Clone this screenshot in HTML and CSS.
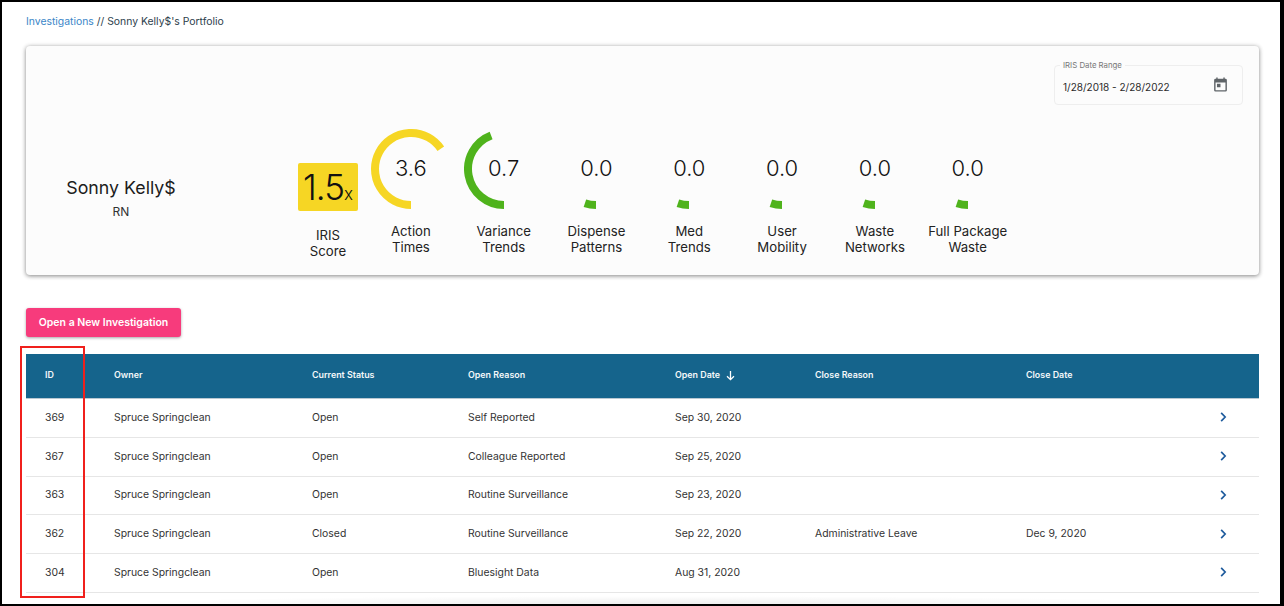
FILE: index.html
```html
<!DOCTYPE html>
<html lang="en">
<head>
<meta charset="utf-8">
<title>Sonny Kelly$'s Portfolio</title>
<link rel="stylesheet" href="styles.css">
</head>
<body>
<div class="page">
  <nav class="crumbs"><a class="crumb-link" href="#">Investigations</a> // Sonny Kelly$'s Portfolio</nav>

  <section class="card">
    <div class="card-top">
      <div class="date-field">
        <span class="date-legend">IRIS Date Range</span>
        <span class="date-value">1/28/2018 - 2/28/2022</span>
        <svg class="cal" viewBox="0 0 24 24" width="17" height="17"><path fill="#5f6468" d="M19 4h-1V2h-2v2H8V2H6v2H5a2 2 0 0 0-2 2v14a2 2 0 0 0 2 2h14a2 2 0 0 0 2-2V6a2 2 0 0 0-2-2zm0 16H5V9h14v11zM7 11h5v5H7z"/></svg>
      </div>
    </div>
    <div class="metrics">
      <div class="person">
        <div class="person-name">Sonny Kelly$</div>
        <div class="person-role">RN</div>
      </div>
      <div class="score">
        <div class="score-tile">1.5<span class="score-x">x</span></div>
        <div class="score-label">IRIS<br>Score</div>
      </div>
      <div class="metric">
        <div class="gauge"><svg viewBox="0 0 80 80" width="80" height="80"><path class="arc yellow" d="M40 76A36 36 0 1 1 69.8 19.8"/></svg><span class="gauge-value">3.6</span></div>
        <div class="metric-label">Action<br>Times</div>
      </div>
      <div class="metric">
        <div class="gauge"><svg viewBox="0 0 80 80" width="80" height="80"><path class="arc green" d="M40 76A36 36 0 0 1 27.1 6.4"/></svg><span class="gauge-value">0.7</span></div>
        <div class="metric-label">Variance<br>Trends</div>
      </div>
      <div class="metric">
        <div class="gauge"><svg viewBox="0 0 80 80" width="80" height="80"><path class="arc green" d="M40 76A36 36 0 0 1 28.9 74.2"/></svg><span class="gauge-value">0.0</span></div>
        <div class="metric-label">Dispense<br>Patterns</div>
      </div>
      <div class="metric">
        <div class="gauge"><svg viewBox="0 0 80 80" width="80" height="80"><path class="arc green" d="M40 76A36 36 0 0 1 28.9 74.2"/></svg><span class="gauge-value">0.0</span></div>
        <div class="metric-label">Med<br>Trends</div>
      </div>
      <div class="metric">
        <div class="gauge"><svg viewBox="0 0 80 80" width="80" height="80"><path class="arc green" d="M40 76A36 36 0 0 1 28.9 74.2"/></svg><span class="gauge-value">0.0</span></div>
        <div class="metric-label">User<br>Mobility</div>
      </div>
      <div class="metric">
        <div class="gauge"><svg viewBox="0 0 80 80" width="80" height="80"><path class="arc green" d="M40 76A36 36 0 0 1 28.9 74.2"/></svg><span class="gauge-value">0.0</span></div>
        <div class="metric-label">Waste<br>Networks</div>
      </div>
      <div class="metric">
        <div class="gauge"><svg viewBox="0 0 80 80" width="80" height="80"><path class="arc green" d="M40 76A36 36 0 0 1 28.9 74.2"/></svg><span class="gauge-value">0.0</span></div>
        <div class="metric-label">Full Package<br>Waste</div>
      </div>
    </div>
  </section>

  <button class="new-btn" type="button">Open a New Investigation</button>

  <div class="table">
    <div class="row head">
      <span>ID</span><span>Owner</span><span>Current Status</span><span>Open Reason</span>
      <span class="sorted">Open Date <svg class="sort" viewBox="0 0 12 12" width="11" height="11"><path d="M6 1v9.5M2.2 6.8 6 10.6l3.8-3.8" fill="none" stroke="#fff" stroke-width="1.4"/></svg></span>
      <span>Close Reason</span><span>Close Date</span><span></span>
    </div>
    <div class="row">
      <span>369</span><span>Spruce Springclean</span><span>Open</span><span>Self Reported</span><span>Sep 30, 2020</span><span></span><span></span>
      <svg class="chev" viewBox="0 0 8 12" width="7" height="10"><path d="M1.2 1 6 6l-4.8 5"/></svg>
    </div>
    <div class="row">
      <span>367</span><span>Spruce Springclean</span><span>Open</span><span>Colleague Reported</span><span>Sep 25, 2020</span><span></span><span></span>
      <svg class="chev" viewBox="0 0 8 12" width="7" height="10"><path d="M1.2 1 6 6l-4.8 5"/></svg>
    </div>
    <div class="row">
      <span>363</span><span>Spruce Springclean</span><span>Open</span><span>Routine Surveillance</span><span>Sep 23, 2020</span><span></span><span></span>
      <svg class="chev" viewBox="0 0 8 12" width="7" height="10"><path d="M1.2 1 6 6l-4.8 5"/></svg>
    </div>
    <div class="row">
      <span>362</span><span>Spruce Springclean</span><span>Closed</span><span>Routine Surveillance</span><span>Sep 22, 2020</span><span>Administrative Leave</span><span>Dec 9, 2020</span>
      <svg class="chev" viewBox="0 0 8 12" width="7" height="10"><path d="M1.2 1 6 6l-4.8 5"/></svg>
    </div>
    <div class="row">
      <span>304</span><span>Spruce Springclean</span><span>Open</span><span>Bluesight Data</span><span>Aug 31, 2020</span><span></span><span></span>
      <svg class="chev" viewBox="0 0 8 12" width="7" height="10"><path d="M1.2 1 6 6l-4.8 5"/></svg>
    </div>
    <div class="row tail"></div>
  </div>

  <div class="highlight"></div>
  <div class="bottom-shade"></div>
</div>
</body>
</html>
```
FILE: styles.css
```css
* { box-sizing: border-box; }
html, body { height: 100%; }
body {
  margin: 0;
  background: #000;
  overflow: hidden;
  font-family: "Inter", "Liberation Sans", sans-serif;
  color: #111;
}
.page {
  position: relative;
  width: 1278px;
  height: 602px;
  margin: 2px 0 0 2px;
  padding: 0 21px 0 24px;
  background: #fff;
  overflow: hidden;
}
.crumbs {
  height: 44px;
  padding-top: 13px;
  font-size: 10.4px;
  line-height: 14px;
  color: #2c3e4c;
}
.crumb-link { color: #3a86c8; text-decoration: none; }
.card {
  height: 229px;
  padding: 19px 16px 0 0;
  background: #fcfcfc;
  border-radius: 4px;
  box-shadow: 0 1px 4px rgba(0, 0, 0, .45), 0 0 6px rgba(0, 0, 0, .06);
}
.card-top { display: flex; justify-content: flex-end; }
.date-field {
  position: relative;
  display: flex;
  align-items: center;
  justify-content: space-between;
  width: 189px;
  height: 40px;
  padding: 3px 13px 0 8px;
  border: 1px solid #eeeeee;
  border-radius: 4px;
}
.date-legend {
  position: absolute;
  top: -6px;
  left: 5px;
  padding: 0 3px;
  background: #fcfcfc;
  font-size: 7.8px;
  line-height: 11px;
  color: #777;
}
.date-value { font-size: 10px; color: #2b2b2b; }
.cal { margin-top: -4px; }
.metrics { display: flex; margin-top: 23.5px; }
.person { width: 190px; margin: 47px 75.5px 0 0; text-align: center; }
.person-name { font-size: 17.8px; line-height: 24px; color: #1c1c1c; }
.person-role { margin-top: 3px; font-size: 12px; line-height: 18px; color: #333; }
.score { width: 73px; display: flex; flex-direction: column; align-items: center; padding-top: 34px; }
.score-tile {
  width: 60px;
  height: 48px;
  background: #f6d624;
  border-radius: 2px;
  text-align: center;
  font-size: 35px;
  font-weight: 300;
  letter-spacing: -1px;
  line-height: 48px;
  white-space: nowrap;
  color: #111;
}
.score-x { font-size: 17px; letter-spacing: 0; }
.score-label { margin-top: 16px; font-size: 13.2px; line-height: 16px; text-align: center; color: #222; }
.metric { width: 92.8px; display: flex; flex-direction: column; align-items: center; }
.gauge { position: relative; width: 80px; height: 80px; }
.gauge svg { display: block; }
.arc { fill: none; stroke-width: 8; }
.yellow { stroke: #f6d624; }
.green { stroke: #4fb31c; }
.gauge-value {
  position: absolute;
  left: 0;
  right: 0;
  top: 25px;
  text-align: center;
  font-size: 22px;
  font-weight: 350;
  line-height: 28px;
  color: #111;
}
.metric-label { margin-top: 14px; font-size: 13.2px; line-height: 16px; text-align: center; white-space: nowrap; color: #222; }
.new-btn {
  display: block;
  width: 155px;
  height: 29px;
  margin-top: 33px;
  padding: 0;
  border: 0;
  border-radius: 3px;
  background: #f73b7c;
  box-shadow: 0 1px 3px rgba(0, 0, 0, .35);
  font-family: inherit;
  font-size: 10.5px;
  font-weight: 600;
  color: #fff;
}
.table { margin-top: 17px; }
.row {
  display: grid;
  grid-template-columns: 69px 198px 156px 207px 140px 211px 1fr 39px;
  align-items: center;
  height: 38.75px;
  padding-bottom: 1px;
  padding-left: 19px;
  border-bottom: 1px solid #e6e6e6;
  font-size: 10.4px;
  color: #333;
}
.row.head {
  height: 45px;
  padding-bottom: 3px;
  border-bottom: 1px solid #b9c8d2;
  background: #15648c;
  font-size: 8.9px;
  font-weight: 600;
  color: #f4f8fa;
}
.row.tail { border-bottom: 0; }
.sorted { display: flex; align-items: center; gap: 5px; }
.sort { margin-top: 1px; }
.chev { fill: none; stroke: #1d5a9c; stroke-width: 2; justify-self: start; }
.highlight {
  position: absolute;
  left: 18px;
  top: 344px;
  width: 65px;
  height: 252px;
  border: 2px solid #f0201c;
}
.bottom-shade {
  position: absolute;
  left: 100px;
  right: 60px;
  bottom: 0;
  height: 8px;
  background: radial-gradient(ellipse 50% 100% at 50% 100%, rgba(0, 0, 0, .07), rgba(0, 0, 0, 0));
}
```
